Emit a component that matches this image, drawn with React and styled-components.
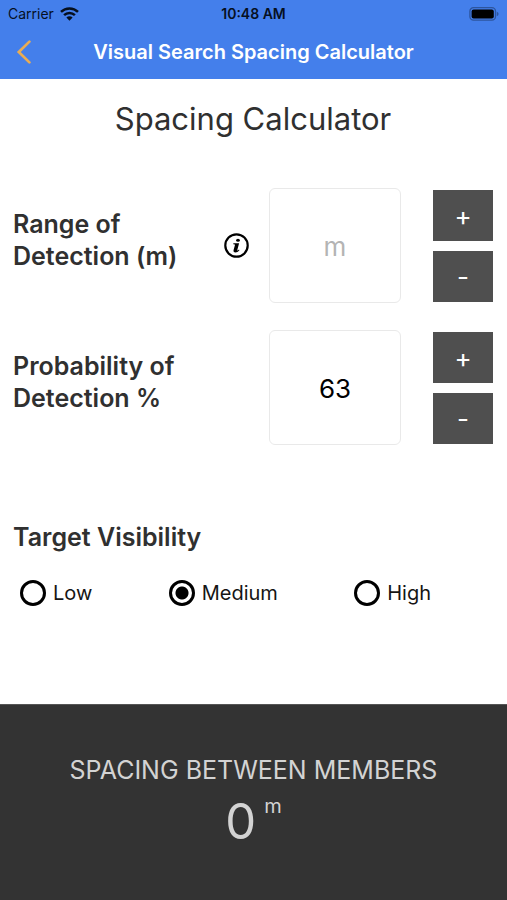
import React, { useState } from "react";
import styled, { createGlobalStyle } from "styled-components";

const GlobalStyle = createGlobalStyle`
  *, *::before, *::after { box-sizing: border-box; }
  body {
    margin: 0;
    background: #fff;
    color: #303030;
    font-family: Inter, Roboto, sans-serif;
  }
  button, input { font-family: inherit; }
`;

const Screen = styled.div`
  display: flex;
  flex-direction: column;
  min-height: 100vh;
`;

const Header = styled.header`
  background: #447feb;
  padding-bottom: 6px;
`;

const StatusBar = styled.div`
  display: grid;
  grid-template-columns: 1fr auto 1fr;
  align-items: center;
  height: 27px;
  padding: 0 8px;
  color: #06101f;
  font-size: 14px;
  line-height: 16px;
`;

const Carrier = styled.div`
  display: flex;
  align-items: center;
  gap: 6px;
`;

const Clock = styled.time`
  font-weight: 600;
`;

const BatterySlot = styled.div`
  display: flex;
  justify-content: flex-end;
`;

const NavBar = styled.div`
  display: grid;
  grid-template-columns: 48px 1fr 48px;
  align-items: center;
  height: 46px;
  padding-top: 4px;
`;

const BackButton = styled.button`
  display: flex;
  padding: 4px 16px;
  border: 0;
  background: none;
  cursor: pointer;
`;

const NavTitle = styled.div`
  color: #fff;
  font-size: 20px;
  font-weight: 600;
  line-height: 24px;
  text-align: center;
  white-space: nowrap;
`;

const Main = styled.main`
  padding: 20px 14px 32px 13px;
`;

const PageTitle = styled.h1`
  margin: 0 0 49px;
  font-size: 31px;
  font-weight: 400;
  line-height: 40px;
  text-align: center;
`;

const FieldRow = styled.div`
  display: flex;
  align-items: center;
  margin-bottom: 27px;
`;

const LabelArea = styled.div`
  display: flex;
  flex: 1;
  align-items: center;
  justify-content: space-between;
  margin-right: 20px;
`;

const FieldLabel = styled.label`
  max-width: 190px;
  padding-bottom: 12px;
  font-size: 25px;
  font-weight: 600;
  line-height: 32px;
`;

const InfoButton = styled.button`
  display: flex;
  padding: 0;
  border: 0;
  background: none;
  cursor: pointer;
`;

const NumberInput = styled.input`
  width: 132px;
  height: 115px;
  padding: 2px 0 0;
  border: 1px solid #e9e9e9;
  border-radius: 6px;
  background: #fff;
  color: #000;
  font-size: 26px;
  text-align: center;
  &::placeholder { color: #b4b4b4; opacity: 1; }
`;

const Stepper = styled.div`
  display: grid;
  gap: 10px;
  margin-left: 32px;
`;

const StepButton = styled.button`
  width: 60px;
  height: 51px;
  padding: 2px 0 0;
  border: 0;
  background: #4f4f4f;
  color: #fff;
  font-size: 26px;
  line-height: 32px;
  cursor: pointer;
`;

const Visibility = styled.fieldset`
  margin: 76px 0 0;
  padding: 0;
  border: 0;
`;

const Legend = styled.legend`
  padding: 0;
  font-size: 25px;
  font-weight: 600;
  line-height: 32px;
`;

const Options = styled.div`
  display: flex;
  justify-content: space-between;
  padding: 26px 62px 0 7px;
`;

const Option = styled.label`
  display: flex;
  align-items: center;
  gap: 7px;
  color: #151515;
  font-size: 20px;
  line-height: 28px;
`;

const Radio = styled.input`
  appearance: none;
  width: 26px;
  height: 26px;
  margin: 0;
  border: 3px solid #000;
  border-radius: 50%;
  background: #fff;
  &:checked {
    background: radial-gradient(circle, #000 6px, #fff 7px);
  }
`;

const Result = styled.footer`
  display: flex;
  flex-direction: column;
  align-items: center;
  margin-top: auto;
  padding: 49px 16px 50px;
  border-top: 1px solid #555;
  background: #333;
  color: #d3d3d3;
`;

const ResultLabel = styled.div`
  font-size: 25px;
  line-height: 32px;
  white-space: nowrap;
`;

const ResultValue = styled.output`
  display: flex;
  align-items: flex-start;
  gap: 8px;
  margin-top: 8px;
  font-size: 49px;
  line-height: 56px;
`;

const Unit = styled.span`
  font-size: 20px;
  line-height: 24px;
`;

function WifiIcon() {
  return (
    <svg width="19" height="14" viewBox="0 0 19 14" aria-hidden="true">
      <g fill="none" stroke="#06101f" strokeWidth="2.5">
        <path d="M1 4.9a12.2 12.2 0 0 1 17 0" />
        <path d="M4.1 8.2a7.7 7.7 0 0 1 10.8 0" />
      </g>
      <path d="M9.5 13.7 6.4 10.6a4.4 4.4 0 0 1 6.2 0z" fill="#06101f" />
    </svg>
  );
}

function BatteryIcon() {
  return (
    <svg width="30" height="14" viewBox="0 0 30 14" aria-hidden="true">
      <rect x="0.9" y="0.7" width="25.6" height="12.4" rx="3.6" fill="none" stroke="#2d559e" strokeWidth="1.3" />
      <rect x="2.6" y="2.4" width="22.2" height="9" rx="2" fill="#000" />
      <path d="M27.8 4.8c1.4.5 1.7 1.3 1.7 2.1s-.3 1.6-1.7 2.1z" fill="#2d559e" />
    </svg>
  );
}

function BackIcon() {
  return (
    <svg width="16" height="24" viewBox="0 0 16 24" aria-hidden="true">
      <path d="M13.4 1.6 2.8 12l10.6 10.4" fill="none" stroke="#e9ad55" strokeWidth="2.7" strokeLinecap="round" />
    </svg>
  );
}

function InfoIcon() {
  return (
    <svg width="25" height="25" viewBox="0 0 25 25" aria-hidden="true">
      <circle cx="12.5" cy="12.5" r="11.2" fill="none" stroke="#000" strokeWidth="2.2" />
      <ellipse cx="14" cy="7.2" rx="1.9" ry="1.5" fill="#000" />
      <path d="M9.400 10.200h5.700l-1.800 6.800c-.1.700.3.700.8.300l.9-.7.4.7c-1.300 1.500-2.600 2.200-3.900 2.200-1.700 0-2.300-1-1.900-2.400l1.300-4.800c.2-.7-.2-.9-1.700-1z" fill="#000" />
    </svg>
  );
}

function Field({ id, label, info, value, placeholder, onChange }) {
  const step = (amount) => onChange(String(Math.max(0, Number(value || 0) + amount)));
  return (
    <FieldRow>
      <LabelArea>
        <FieldLabel htmlFor={id}>{label}</FieldLabel>
        {info && (
          <InfoButton type="button" aria-label="About range of detection">
            <InfoIcon />
          </InfoButton>
        )}
      </LabelArea>
      <NumberInput
        id={id}
        inputMode="numeric"
        value={value}
        placeholder={placeholder}
        onChange={(event) => onChange(event.target.value)}
      />
      <Stepper>
        <StepButton type="button" onClick={() => step(1)}>+</StepButton>
        <StepButton type="button" onClick={() => step(-1)}>-</StepButton>
      </Stepper>
    </FieldRow>
  );
}

export default function App() {
  const [range, setRange] = useState("");
  const [probability, setProbability] = useState("63");
  const [visibility, setVisibility] = useState("Medium");

  return (
    <Screen>
      <GlobalStyle />
      <Header>
        <StatusBar>
          <Carrier>Carrier <WifiIcon /></Carrier>
          <Clock>10:48 AM</Clock>
          <BatterySlot><BatteryIcon /></BatterySlot>
        </StatusBar>
        <NavBar>
          <BackButton type="button" aria-label="Back"><BackIcon /></BackButton>
          <NavTitle>Visual Search Spacing Calculator</NavTitle>
        </NavBar>
      </Header>
      <Main>
        <PageTitle>Spacing Calculator</PageTitle>
        <Field id="range" label="Range of Detection (m)" info value={range} placeholder="m" onChange={setRange} />
        <Field id="probability" label="Probability of Detection %" value={probability} onChange={setProbability} />
        <Visibility>
          <Legend>Target Visibility</Legend>
          <Options>
            {["Low", "Medium", "High"].map((level) => (
              <Option key={level}>
                <Radio
                  type="radio"
                  name="visibility"
                  value={level}
                  checked={visibility === level}
                  onChange={() => setVisibility(level)}
                />
                {level}
              </Option>
            ))}
          </Options>
        </Visibility>
      </Main>
      <Result>
        <ResultLabel>SPACING BETWEEN MEMBERS</ResultLabel>
        <ResultValue>0<Unit>m</Unit></ResultValue>
      </Result>
    </Screen>
  );
}
